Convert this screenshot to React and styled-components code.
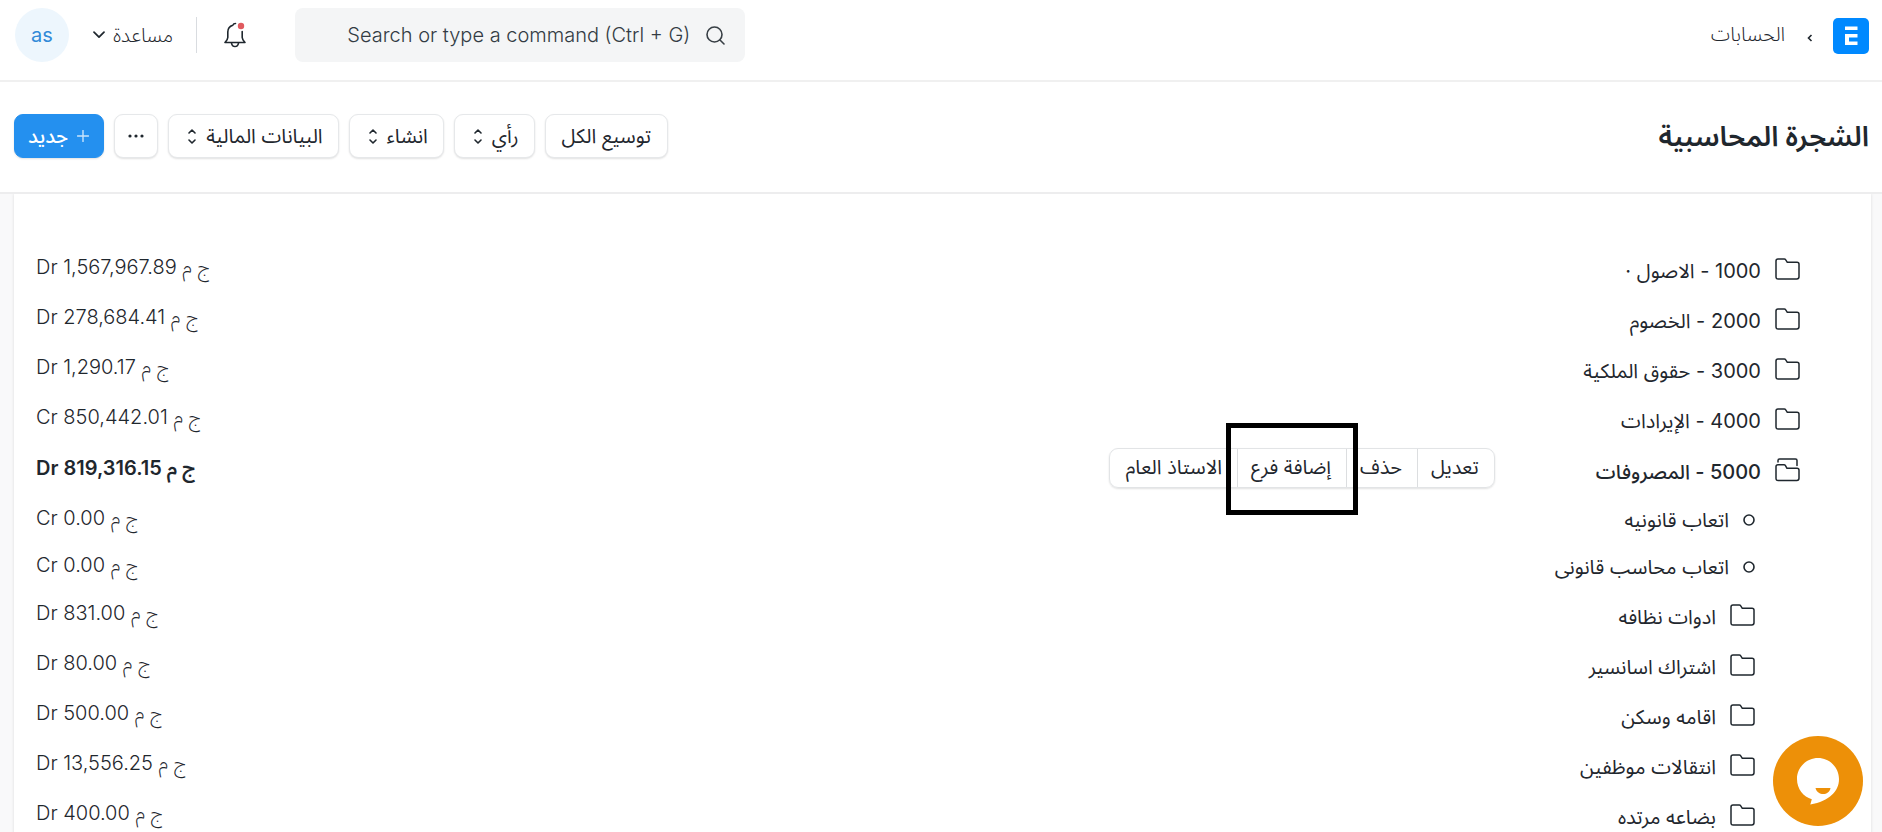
import React from 'react';
import styled, { createGlobalStyle, css } from 'styled-components';

const GlobalStyle = createGlobalStyle`
  * {
    box-sizing: border-box;
  }

  body {
    margin: 0;
    background-color: #f9f9fa;
    color: #1f272e;
    font-family: Inter, 'Noto Sans Arabic', 'DejaVu Sans', sans-serif;
    font-size: 20px;
    font-weight: 380;
    line-height: 30px;
  }

  button, input {
    font: inherit;
    color: inherit;
  }
`;

const Page = styled.div`
  display: flex;
  flex-direction: column;
  height: 100vh;
  overflow: hidden;
`;

const Navbar = styled.header`
  display: flex;
  justify-content: space-between;
  align-items: flex-start;
  padding: 8px 13px 18px 15px;
  background-color: #fff;
  border-bottom: 2px solid #f0f0f0;
`;

const Breadcrumbs = styled.nav`
  display: flex;
  align-items: center;
  padding-top: 10px;
`;

const LogoLink = styled.a`
  display: flex;
`;

const Separator = styled.span`
  margin-right: 20px;
  width: 6px;
  display: flex;
  padding-top: 3px;
`;

const Crumb = styled.a`
  margin-right: 22px;
  padding-bottom: 4px;
  color: #1f272e;
  font-weight: 350;
  text-decoration: none;
`;

const NavTools = styled.div`
  display: flex;
  align-items: center;
`;

const SearchBar = styled.label`
  display: flex;
  align-items: center;
  gap: 16px;
  width: 450px;
  height: 54px;
  padding: 0 20px;
  border-radius: 8px;
  background-color: #f4f5f6;
  color: #383f45;
`;

const SearchInput = styled.input`
  flex: 1;
  min-width: 0;
  padding: 0;
  border: none;
  outline: none;
  background: none;
  font-weight: 300;
  text-align: right;

  &::placeholder {
    color: #333c44;
    opacity: 1;
  }
`;

const IconButton = styled.button`
  display: flex;
  margin-right: 49px;
  padding: 0;
  border: none;
  background: none;
  cursor: pointer;
`;

const Divider = styled.div`
  width: 1px;
  height: 36px;
  margin-right: 27px;
  background-color: #d9dce0;
`;

const HelpButton = styled.button`
  display: flex;
  align-items: center;
  gap: 8px;
  margin-right: 23px;
  padding: 0;
  border: none;
  background: none;
  color: #1f272e;
  font-weight: 300;
  cursor: pointer;
`;

const Avatar = styled.button`
  width: 54px;
  height: 54px;
  margin-right: 24px;
  padding: 0;
  border: none;
  border-radius: 50%;
  background-color: #edf6fd;
  color: #318ad8;
  font-weight: 400;
  cursor: pointer;
`;

const PageHead = styled.div`
  position: relative;
  display: flex;
  justify-content: space-between;
  align-items: center;
  padding: 32px 13px 34px 14px;
  background-color: #fff;
  border-bottom: 2px solid #ededee;
`;

const Title = styled.h1`
  margin: 0;
  font-size: 28px;
  line-height: 44px;
  font-weight: 600;
`;

const Actions = styled.div`
  display: flex;
  gap: 10px;
`;

const ActionButton = styled.button`
  display: flex;
  align-items: center;
  gap: 10px;
  height: 44px;
  padding: 0 16px;
  border: 1px solid #e6e8ea;
  border-radius: 9px;
  background-color: #fff;
  box-shadow: 0 1px 2px rgba(0, 0, 0, 0.12);
  cursor: pointer;

  ${(p) =>
    p.$menu &&
    css`
      padding: 0 15px 0 19px;
    `}

  ${(p) =>
    p.$icon &&
    css`
      padding: 0 13px;
    `}

  ${(p) =>
    p.$primary &&
    css`
      padding: 0 14px 0 13px;
      gap: 9px;
      border-color: #2490ef;
      background-color: #2490ef;
      color: #fff;
      font-weight: 500;
    `}
`;

const Card = styled.main`
  flex: 1;
  margin: 0 11px 0 14px;
  padding: 50px 71px 0 22px;
  background-color: #fff;
  box-shadow: 0 0 3px rgba(0, 0, 0, 0.12);
`;

const Tree = styled.ul`
  margin: 0;
  padding: 0;
  list-style: none;
`;

const SubTree = styled(Tree)`
  padding-right: 45px;
`;

const rowHeights = { leaf: '47px', folder: '50px', open: '52px' };

const Row = styled.div`
  display: flex;
  align-items: center;
  height: ${(p) => rowHeights[p.$kind]};
`;

const NodeLink = styled.a`
  display: flex;
  align-items: center;
  gap: 14px;
  color: inherit;
  text-decoration: none;
`;

const NodeLabel = styled.span`
  padding-top: ${(p) => (p.$kind === 'leaf' ? 0 : '4px')};
  font-weight: ${(p) => (p.$kind === 'open' ? 500 : 'inherit')};
`;

const Balance = styled.span`
  margin-right: auto;
  padding-bottom: 4px;
  font-weight: ${(p) => (p.$kind === 'open' ? 600 : 350)};
`;

const NodeTools = styled.div`
  display: flex;
  height: 40px;
  margin-right: 101px;
  margin-bottom: 4px;
  border: 1px solid #e2e4e6;
  border-radius: 9px;
  box-shadow: 0 1px 2px rgba(0, 0, 0, 0.12);
  font-weight: 400;
`;

const NodeTool = styled.button`
  position: relative;
  padding: 0 15px 2px 13px;
  border: none;
  background: none;
  cursor: pointer;

  &:last-child {
    padding-left: 16px;
  }

  & + & {
    border-right: 1px solid #dcdee0;
  }
`;

const Highlight = styled.span`
  position: absolute;
  inset: -26px -12px -28px;
  z-index: 1;
  border: 5px solid #000;
  pointer-events: none;
`;

const ChatButton = styled.button`
  position: fixed;
  right: 19px;
  bottom: 6px;
  display: flex;
  padding: 0;
  border: none;
  border-radius: 50%;
  background: none;
  cursor: pointer;
`;

const LogoIcon = () => (
  <svg width="36" height="36" viewBox="0 0 36 36">
    <rect width="36" height="36" rx="5" fill="#0089ff" />
    <path d="M12 8.500h12.500v3.500H12zM12 16h12.500v3.500h-8.500v4H24.500v3.500H12z" fill="#fff" />
  </svg>
);

const SearchIcon = () => (
  <svg width="19" height="19" viewBox="0 0 19 19" fill="none" stroke="currentColor" strokeWidth="1.600" strokeLinecap="round">
    <circle cx="8.500" cy="8.500" r="7.500" />
    <path d="M14 14l4 4" />
  </svg>
);

const BellIcon = () => (
  <svg width="22" height="26" viewBox="0 0 22 26" fill="none" stroke="#1f272e" strokeWidth="1.600" strokeLinecap="round" strokeLinejoin="round">
    <path d="M11.500 1.500C10 1.500 9.300 2 8.800 3.200C5.500 4.200 3.800 7 3.800 10V15.500C3.800 17.300 2.800 18.500 1 20.500H21C19.200 18.500 18.200 17.300 18.200 15.500V9.500" />
    <path d="M7.500 21C7.800 23.200 9.200 24.500 11 24.500S14.200 23.200 14.500 21" />
    <circle cx="17" cy="4" r="3.200" fill="#e05a5f" stroke="none" />
  </svg>
);

const ChevronIcon = () => (
  <svg width="12" height="8" viewBox="0 0 12 8" fill="none" stroke="#1f272e" strokeWidth="1.700" strokeLinecap="round" strokeLinejoin="round">
    <path d="M1 1.200L6 6.200L11 1.200" />
  </svg>
);

const CrumbIcon = () => (
  <svg width="6" height="8" viewBox="0 0 6 8" fill="none" stroke="#1f272e" strokeWidth="1.600">
    <path d="M4.500 1L1.500 4L4.500 7" />
  </svg>
);

const SelectIcon = () => (
  <svg width="8" height="16" viewBox="0 0 8 16" fill="none" stroke="#1f272e" strokeWidth="1.600" strokeLinecap="round" strokeLinejoin="round">
    <path d="M1 5L4 2L7 5M1 12L4 15L7 12" />
  </svg>
);

const DotsIcon = () => (
  <svg width="16" height="4" viewBox="0 0 16 4" fill="#1f272e">
    <circle cx="2" cy="2" r="1.600" />
    <circle cx="8" cy="2" r="1.600" />
    <circle cx="14" cy="2" r="1.600" />
  </svg>
);

const PlusIcon = () => (
  <svg width="12" height="12" viewBox="0 0 12 12" stroke="#c9e4fc" strokeWidth="1.400" strokeLinecap="round">
    <path d="M6 0.500V11.500M0.500 6H11.500" />
  </svg>
);

const FolderIcon = () => (
  <svg width="25" height="22" viewBox="0 0 25 22" fill="none" stroke="#1f272e" strokeWidth="1.500" strokeLinejoin="round">
    <path d="M1 3C1 1.700 1.800 1 3 1H9.300C9.900 1 10.300 1.200 10.600 1.700L12.300 4.300H22C23.300 4.300 24 5 24 6.200V18.800C24 20.200 23.200 21 21.800 21H3.200C1.800 21 1 20.200 1 18.800Z" />
  </svg>
);

const FolderOpenIcon = () => (
  <svg width="25" height="24" viewBox="0 0 25 24" fill="none" stroke="#1f272e" strokeWidth="1.500" strokeLinejoin="round" strokeLinecap="round">
    <path d="M3 4V2.500C3 1.500 3.500 1 4.500 1H20.500C21.500 1 22 1.500 22 2.500V7.500" />
    <path d="M1 8.500C1 7.300 1.800 6.700 3 6.700H9C9.600 6.700 10 6.900 10.300 7.400L12 10.300H22C23.300 10.300 24 11 24 12.200V20.300C24 21.700 23.200 22.500 21.800 22.500H3.200C1.800 22.500 1 21.700 1 20.300Z" />
  </svg>
);

const LeafIcon = () => (
  <svg width="12" height="12" viewBox="0 0 12 12" fill="none" stroke="#1f272e" strokeWidth="1.600">
    <circle cx="6" cy="6" r="5" />
  </svg>
);

const ChatIcon = () => (
  <svg width="90" height="90" viewBox="0 0 90 90">
    <circle cx="45" cy="45" r="45" fill="#ed9008" />
    <path d="M45 22C33.400 22 24 31.400 24 43C24 53 30.500 61 38.800 63.200L37.300 68.500C47 67 54 63.500 59 58.800C63.500 54.800 66 49.500 66 43C66 31.400 56.600 22 45 22Z" fill="#fff" />
    <path d="M42.500 52H57.500C56 60 44.500 60 42.500 52Z" fill="#ed9008" />
  </svg>
);

const menus = ['رأي', 'انشاء', 'البيانات المالية'];

const nodeTools = ['تعديل', 'حذف', 'إضافة فرع', 'الاستاذ العام'];

const accounts = [
  { label: '1000 - الاصول ·', balance: 'Dr 1,567,967.89' },
  { label: '2000 - الخصوم', balance: 'Dr 278,684.41' },
  { label: '3000 - حقوق الملكية', balance: 'Dr 1,290.17' },
  { label: '4000 - الإيرادات', balance: 'Cr 850,442.01' },
  {
    label: '5000 - المصروفات',
    balance: 'Dr 819,316.15',
    kind: 'open',
    children: [
      { label: 'اتعاب قانونيه', balance: 'Cr 0.00', kind: 'leaf' },
      { label: 'اتعاب محاسب قانونى', balance: 'Cr 0.00', kind: 'leaf' },
      { label: 'ادوات نظافه', balance: 'Dr 831.00' },
      { label: 'اشتراك اسانسير', balance: 'Dr 80.00' },
      { label: 'اقامه وسكن', balance: 'Dr 500.00' },
      { label: 'انتقالات موظفين', balance: 'Dr 13,556.25' },
      { label: 'بضاعه مرتده', balance: 'Dr 400.00' },
    ],
  },
];

const nodeIcons = {
  leaf: LeafIcon,
  folder: FolderIcon,
  open: FolderOpenIcon,
};

const TreeNode = ({ node }) => {
  const kind = node.kind || 'folder';
  const Icon = nodeIcons[kind];

  return (
    <li>
      <Row $kind={kind}>
        <NodeLink href="#">
          <Icon />
          <NodeLabel $kind={kind}>{node.label}</NodeLabel>
        </NodeLink>
        {kind === 'open' && (
          <NodeTools>
            {nodeTools.map((tool) => (
              <NodeTool key={tool}>
                {tool}
                {tool === 'إضافة فرع' && <Highlight />}
              </NodeTool>
            ))}
          </NodeTools>
        )}
        <Balance dir="ltr" $kind={kind}>{node.balance} ج م</Balance>
      </Row>
      {node.children && (
        <SubTree>
          {node.children.map((child) => (
            <TreeNode key={child.label} node={child} />
          ))}
        </SubTree>
      )}
    </li>
  );
};

const App = () => (
  <Page dir="rtl">
    <GlobalStyle />
    <Navbar>
      <Breadcrumbs>
        <LogoLink href="#" aria-label="ERPNext">
          <LogoIcon />
        </LogoLink>
        <Separator>
          <CrumbIcon />
        </Separator>
        <Crumb href="#">الحسابات</Crumb>
      </Breadcrumbs>
      <NavTools>
        <SearchBar>
          <SearchIcon />
          <SearchInput dir="ltr" type="text" placeholder="Search or type a command (Ctrl + G)" />
        </SearchBar>
        <IconButton aria-label="الإشعارات">
          <BellIcon />
        </IconButton>
        <Divider />
        <HelpButton>
          مساعدة
          <ChevronIcon />
        </HelpButton>
        <Avatar>as</Avatar>
      </NavTools>
    </Navbar>
    <PageHead>
      <Title>الشجرة المحاسبية</Title>
      <Actions>
        <ActionButton>توسيع الكل</ActionButton>
        {menus.map((menu) => (
          <ActionButton key={menu} $menu>
            {menu}
            <SelectIcon />
          </ActionButton>
        ))}
        <ActionButton $icon aria-label="المزيد">
          <DotsIcon />
        </ActionButton>
        <ActionButton $primary>
          <PlusIcon />
          جديد
        </ActionButton>
      </Actions>
    </PageHead>
    <Card>
      <Tree>
        {accounts.map((account) => (
          <TreeNode key={account.label} node={account} />
        ))}
      </Tree>
    </Card>
    <ChatButton aria-label="محادثة">
      <ChatIcon />
    </ChatButton>
  </Page>
);

export default App;
